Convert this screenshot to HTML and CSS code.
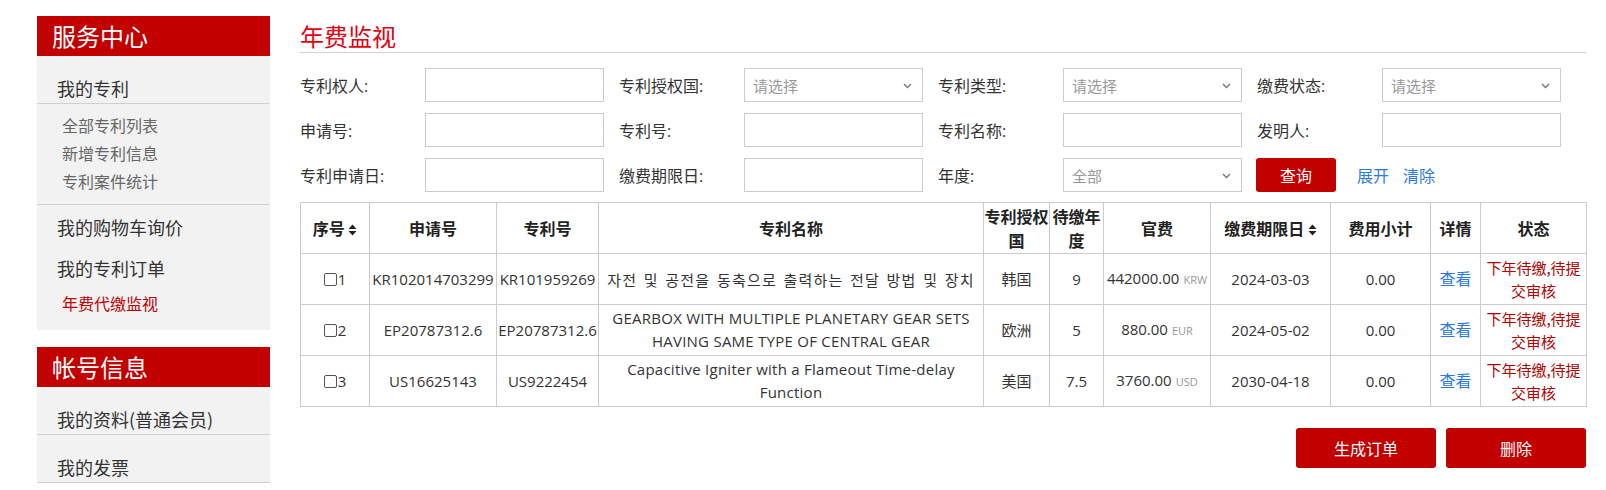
FILE: index.html
```html
<!DOCTYPE html>
<html lang="zh-CN">
<head>
<meta charset="utf-8">
<title>年费监视</title>
<link rel="stylesheet" href="styles.css">
</head>
<body>
<div class="page">
  <aside class="sidebar">
    <div class="side-head">服务中心</div>
    <div class="side-box">
      <div class="menu-title bordered">我的专利</div>
      <ul class="sub-list bordered">
        <li>全部专利列表</li>
        <li>新增专利信息</li>
        <li>专利案件统计</li>
      </ul>
      <div class="menu-item first">我的购物车询价</div>
      <div class="menu-item">我的专利订单</div>
      <ul class="sub-list last">
        <li class="active">年费代缴监视</li>
      </ul>
    </div>
    <div class="side-head second">帐号信息</div>
    <div class="side-box">
      <div class="menu-title bordered">我的资料(普通会员)</div>
      <div class="menu-title bordered">我的发票</div>
    </div>
  </aside>

  <main class="main">
    <h2 class="page-title">年费监视</h2>

    <form class="filters">
      <div class="row">
        <div class="field"><label>专利权人:</label><input type="text"></div>
        <div class="field"><label>专利授权国:</label>
          <div class="select"><span>请选择</span><svg class="chev" width="9" height="6" viewBox="0 0 9 6"><path d="M1 1l3.5 3.5L8 1" fill="none" stroke="#777" stroke-width="1.4"/></svg></div>
        </div>
        <div class="field"><label>专利类型:</label>
          <div class="select"><span>请选择</span><svg class="chev" width="9" height="6" viewBox="0 0 9 6"><path d="M1 1l3.5 3.5L8 1" fill="none" stroke="#777" stroke-width="1.4"/></svg></div>
        </div>
        <div class="field"><label>缴费状态:</label>
          <div class="select"><span>请选择</span><svg class="chev" width="9" height="6" viewBox="0 0 9 6"><path d="M1 1l3.5 3.5L8 1" fill="none" stroke="#777" stroke-width="1.4"/></svg></div>
        </div>
      </div>
      <div class="row">
        <div class="field"><label>申请号:</label><input type="text"></div>
        <div class="field"><label>专利号:</label><input type="text"></div>
        <div class="field"><label>专利名称:</label><input type="text"></div>
        <div class="field"><label>发明人:</label><input type="text"></div>
      </div>
      <div class="row">
        <div class="field"><label>专利申请日:</label><input type="text"></div>
        <div class="field"><label>缴费期限日:</label><input type="text"></div>
        <div class="field"><label>年度:</label>
          <div class="select"><span>全部</span><svg class="chev" width="9" height="6" viewBox="0 0 9 6"><path d="M1 1l3.5 3.5L8 1" fill="none" stroke="#777" stroke-width="1.4"/></svg></div>
        </div>
        <div class="field actions">
          <button type="button" class="btn-query">查询</button>
          <a class="link">展开</a>
          <a class="link">清除</a>
        </div>
      </div>
    </form>

    <table class="grid">
      <colgroup>
        <col style="width:69px"><col style="width:127px"><col style="width:102px"><col style="width:385px">
        <col style="width:66px"><col style="width:54px"><col style="width:107px"><col style="width:120px">
        <col style="width:100px"><col style="width:50px"><col style="width:106px">
      </colgroup>
      <thead>
        <tr>
          <th>序号 <svg class="sort" width="9" height="12" viewBox="0 0 9 12"><path d="M4.5 0.5L8.5 5H0.5Z M4.5 11.5L8.5 7H0.5Z" fill="#222"/></svg></th>
          <th>申请号</th>
          <th>专利号</th>
          <th>专利名称</th>
          <th class="tight">专利授权国</th>
          <th class="tight">待缴年度</th>
          <th>官费</th>
          <th>缴费期限日 <svg class="sort" width="9" height="12" viewBox="0 0 9 12"><path d="M4.5 0.5L8.5 5H0.5Z M4.5 11.5L8.5 7H0.5Z" fill="#222"/></svg></th>
          <th>费用小计</th>
          <th>详情</th>
          <th>状态</th>
        </tr>
      </thead>
      <tbody>
        <tr>
          <td><input type="checkbox" class="chk">1</td>
          <td>KR102014703299</td>
          <td>KR101959269</td>
          <td class="name ko">자전 및 공전을 동축으로 출력하는 전달 방법 및 장치</td>
          <td>韩国</td>
          <td>9</td>
          <td>442000.00<span class="cur">KRW</span></td>
          <td>2024-03-03</td>
          <td>0.00</td>
          <td><a class="link">查看</a></td>
          <td class="status">下年待缴,待提交审核</td>
        </tr>
        <tr>
          <td><input type="checkbox" class="chk">2</td>
          <td>EP20787312.6</td>
          <td>EP20787312.6</td>
          <td class="name">GEARBOX WITH MULTIPLE PLANETARY GEAR SETS HAVING SAME TYPE OF CENTRAL GEAR</td>
          <td>欧洲</td>
          <td>5</td>
          <td>880.00<span class="cur">EUR</span></td>
          <td>2024-05-02</td>
          <td>0.00</td>
          <td><a class="link">查看</a></td>
          <td class="status">下年待缴,待提交审核</td>
        </tr>
        <tr>
          <td><input type="checkbox" class="chk">3</td>
          <td>US16625143</td>
          <td>US9222454</td>
          <td class="name">Capacitive Igniter with a Flameout Time-delay Function</td>
          <td>美国</td>
          <td>7.5</td>
          <td>3760.00<span class="cur">USD</span></td>
          <td>2030-04-18</td>
          <td>0.00</td>
          <td><a class="link">查看</a></td>
          <td class="status">下年待缴,待提交审核</td>
        </tr>
      </tbody>
    </table>

    <div class="bottom-actions">
      <button type="button" class="btn-big">生成订单</button>
      <button type="button" class="btn-big">删除</button>
    </div>
  </main>
</div>
</body>
</html>
```

FILE: styles.css
```css
* { box-sizing: border-box; }

html, body {
  margin: 0;
  padding: 0;
  background: #fff;
}

body {
  font-family: "Open Sans", "Noto Sans CJK SC", sans-serif;
  color: #333;
  font-size: 16px;
}

.page {
  display: flex;
  align-items: flex-start;
  padding: 16px 0 0 37px;
  gap: 30px;
}

/* Sidebar */
.sidebar {
  width: 233px;
  flex: none;
}

.side-head {
  height: 40px;
  line-height: 40px;
  background: #c30000;
  color: #fff;
  font-size: 24px;
  padding-left: 15px;
  font-family: "Noto Sans CJK SC", sans-serif;
}

.side-head.second {
  margin-top: 17px;
}

.side-box {
  background: #f2f2f2;
}

.menu-title {
  font-size: 18px;
  line-height: 24px;
  padding: 20px 0 3px 20px;
  color: #333;
  font-family: "Noto Sans CJK SC", sans-serif;
}

.bordered {
  border-bottom: 1px solid #d0d0d0;
}

.sub-list {
  list-style: none;
  margin: 0;
  padding: 7px 0 9px 25px;
  font-size: 16px;
  line-height: 28px;
  color: #666;
  font-family: "Noto Sans CJK SC", sans-serif;
}

.sub-list.last {
  padding: 0 0 13px 25px;
}

.sub-list .active {
  color: #c00000;
}

.menu-item {
  font-size: 18px;
  line-height: 41px;
  padding-left: 20px;
  color: #333;
  font-family: "Noto Sans CJK SC", sans-serif;
}

.menu-item.first {
  margin-top: 2px;
}

/* Main */
.main {
  width: 1286px;
  flex: none;
}

.page-title {
  margin: 0;
  padding-top: 4px;
  font-size: 24px;
  line-height: 32px;
  font-weight: normal;
  color: #e60012;
  border-bottom: 1px solid #d0d0d0;
  font-family: "Noto Sans CJK SC", sans-serif;
}

.filters {
  margin-top: 15px;
  display: flex;
  flex-direction: column;
  gap: 11px;
}

.row {
  display: flex;
  gap: 15px;
}

.field {
  display: flex;
  align-items: center;
  width: 304px;
}

.field label {
  width: 125px;
  flex: none;
  font-size: 16px;
  color: #333;
}

.field input[type="text"],
.select {
  width: 179px;
  height: 34px;
  border: 1px solid #ccc;
  background: #fff;
  margin: 0;
  padding: 0 8px;
  font: inherit;
}

.select {
  position: relative;
  display: flex;
  align-items: center;
  font-size: 15px;
  color: #999;
}

.chev {
  position: absolute;
  right: 10px;
  top: 14px;
}

.actions {
  width: auto;
}

.btn-query {
  width: 80px;
  height: 34px;
  border: none;
  border-radius: 3px;
  background: #c30000;
  color: #fff;
  font-size: 16px;
  font-family: "Noto Sans CJK SC", sans-serif;
  padding: 0;
  margin-left: -1px;
  margin-right: 21px;
}

.link {
  color: #2a7ae2;
  cursor: pointer;
  font-size: 16px;
  font-family: "Noto Sans CJK SC", sans-serif;
}

.actions .link + .link {
  margin-left: 14px;
}

/* Table */
.grid {
  margin-top: 10px;
  width: 1286px;
  table-layout: fixed;
  border-collapse: collapse;
  font-size: 15px;
  color: #333;
}

.grid th,
.grid td {
  border: 1px solid #ccc;
  text-align: center;
  vertical-align: middle;
  padding: 2px 1px;
  line-height: 23px;
}

.grid th {
  font-weight: bold;
  font-size: 16px;
  line-height: 24px;
  color: #222;
  padding: 1px 1px;
  height: 51px;
  font-family: "Noto Sans CJK SC", sans-serif;
}

.grid th.tight {
  padding: 1px 0;
}

.grid td {
  height: 51px;
}

.sort {
  vertical-align: -1px;
}

.grid td.name {
  letter-spacing: 0.25px;
  padding: 2px 3px;
}

.grid td.ko {
  font-family: "Noto Sans CJK KR", sans-serif;
  font-size: 15px;
  letter-spacing: 1.2px;
  word-spacing: 2px;
  white-space: nowrap;
}

.chk {
  -webkit-appearance: none;
  appearance: none;
  width: 13px;
  height: 13px;
  border: 1px solid #555;
  border-radius: 2px;
  margin: 0 1px 0 0;
  vertical-align: -1px;
  background: #fff;
}

.cur {
  font-size: 11px;
  color: #999;
  margin-left: 4px;
}

.status {
  color: #b40000;
  font-family: "Noto Sans CJK SC", sans-serif;
}

.grid .link {
  font-size: 16px;
}

.bottom-actions {
  display: flex;
  justify-content: flex-end;
  gap: 10px;
  margin-top: 21px;
}

.btn-big {
  width: 140px;
  height: 40px;
  border: none;
  border-radius: 3px;
  background: #c30000;
  color: #fff;
  font-size: 16px;
  font-family: "Noto Sans CJK SC", sans-serif;
  padding: 0;
}
```
